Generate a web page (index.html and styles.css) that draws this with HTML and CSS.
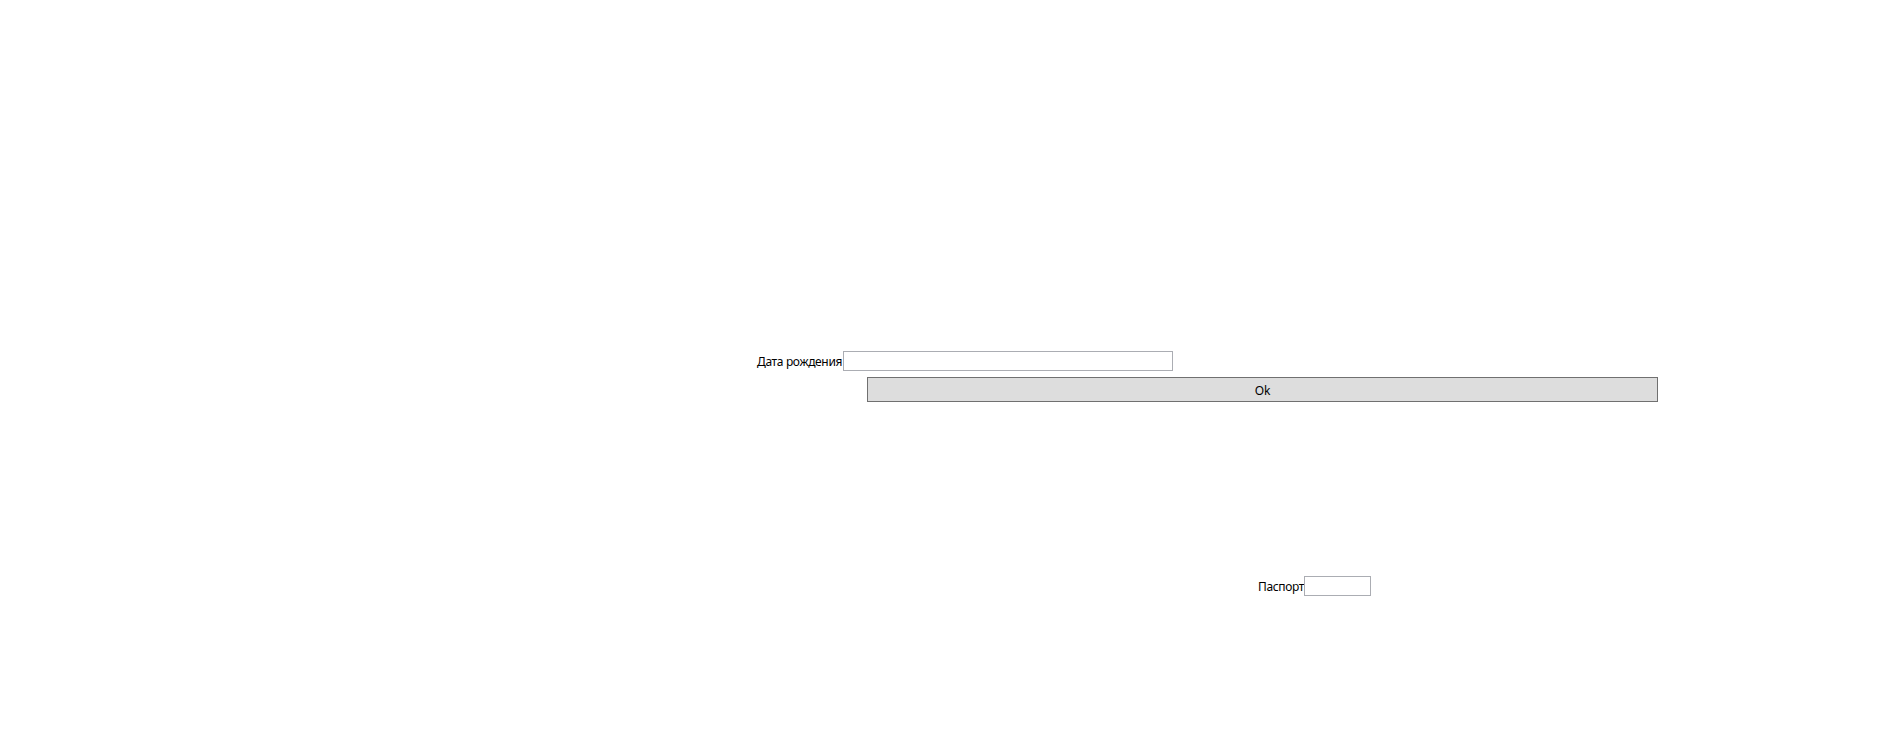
FILE: index.html
```html
<!DOCTYPE html>
<html lang="ru">
<head>
<meta charset="utf-8">
<title>Form</title>
<link rel="stylesheet" href="styles.css">
</head>
<body>
<div class="window">
  <div class="row row-birth">
    <span class="label label-birth">Дата рождения</span>
    <input class="textbox textbox-birth" type="text">
  </div>
  <div class="row row-ok">
    <button class="button-ok" type="button">Ok</button>
  </div>
  <div class="row row-passport">
    <span class="label label-passport">Паспорт</span>
    <input class="textbox textbox-passport" type="text">
  </div>
</div>
</body>
</html>
```

FILE: styles.css
```css
html, body {
  margin: 0;
  padding: 0;
  background: #ffffff;
}

.window {
  width: 1896px;
  height: 734px;
  font-family: "Noto Sans", "Open Sans", sans-serif;
  font-size: 12px;
  color: #000000;
  display: flex;
  flex-direction: column;
  overflow: hidden;
}

.row {
  display: flex;
  align-items: center;
}

.row-birth {
  margin-top: 351px;
  padding-left: 757px;
  height: 20px;
}

.label {
  white-space: nowrap;
  line-height: 20px;
  padding-top: 2px;
  letter-spacing: -0.35px;
  overflow: visible;
}

.label-birth {
  width: 86px;
}

.label-passport {
  width: 46px;
}

.textbox {
  box-sizing: border-box;
  height: 20px;
  margin: 0;
  padding: 0 2px;
  border: 1px solid #abadb3;
  background: #ffffff;
  outline: none;
  font: inherit;
}

.textbox-birth {
  width: 330px;
}

.row-ok {
  margin-top: 6px;
  padding-left: 867px;
}

.button-ok {
  box-sizing: border-box;
  width: 791px;
  height: 25px;
  margin: 0;
  padding: 2px 0 0 0;
  border: 1px solid #707070;
  background: #dddddd;
  font: inherit;
  letter-spacing: -0.2px;
  color: #000000;
  border-radius: 0;
}

.row-passport {
  margin-top: 174px;
  padding-left: 1258px;
  height: 20px;
}

.textbox-passport {
  width: 67px;
}
```
